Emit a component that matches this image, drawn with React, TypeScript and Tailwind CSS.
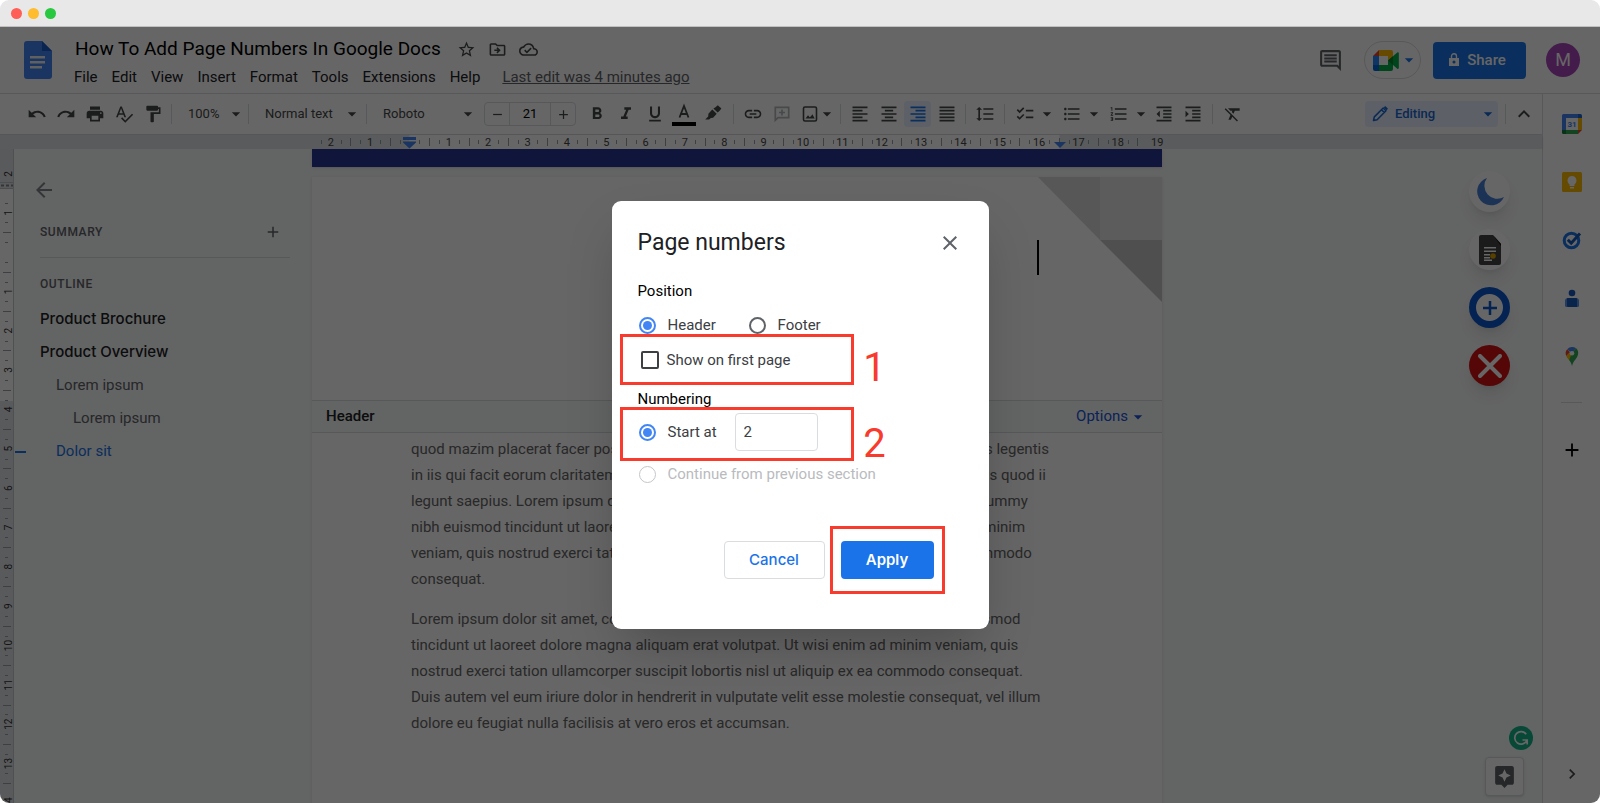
import React, { useState } from 'react';
import type { IconType } from 'react-icons';
import {
  MdAdd,
  MdArrowBack,
  MdArrowDropDown,
  MdAssistant,
  MdChecklist,
  MdChevronRight,
  MdClose,
  MdExpandLess,
  MdFormatAlignCenter,
  MdFormatAlignJustify,
  MdFormatAlignLeft,
  MdFormatAlignRight,
  MdFormatBold,
  MdFormatClear,
  MdFormatIndentDecrease,
  MdFormatIndentIncrease,
  MdFormatItalic,
  MdFormatLineSpacing,
  MdFormatListBulleted,
  MdFormatListNumbered,
  MdFormatPaint,
  MdFormatUnderlined,
  MdInsertLink,
  MdOutlineCloudDone,
  MdOutlineComment,
  MdOutlineDriveFileMove,
  MdPrint,
  MdRedo,
  MdRemove,
  MdSpellcheck,
  MdStarBorder,
  MdUndo,
} from 'react-icons/md';

const MENUS = ['File', 'Edit', 'View', 'Insert', 'Format', 'Tools', 'Extensions', 'Help'];

const OUTLINE = [
  { label: 'Product Brochure', className: "pl-[26px] font-['Inter',sans-serif] font-medium text-[#202124]" },
  { label: 'Product Overview', className: "pl-[26px] font-['Inter',sans-serif] font-medium text-[#202124]" },
  { label: 'Lorem ipsum', className: 'pl-[42px] text-[#5f6368]' },
  { label: 'Lorem ipsum', className: 'pl-[59px] text-[#5f6368]' },
  { label: 'Dolor sit', className: 'pl-[42px] text-[#1a73e8]', active: true },
];

const PARAGRAPHS = [
  [
    'quod mazim placerat facer possim assum. Typi non habent claritatem insitam; est usus legentis',
    'in iis qui facit eorum claritatem. Investigationes demonstraverunt lectores legere me lius quod ii',
    'legunt saepius. Lorem ipsum dolor sit amet, consectetuer adipiscing elit, sed diam nonummy',
    'nibh euismod tincidunt ut laoreet dolore magna aliquam erat volutpat. Ut wisi enim ad minim',
    'veniam, quis nostrud exerci tation ullamcorper suscipit lobortis nisl ut aliquip ex ea commodo',
    'consequat.',
  ],
  [
    'Lorem ipsum dolor sit amet, cons ectetuer adipiscing elit, sed diam nonummy nibh euismod',
    'tincidunt ut laoreet dolore magna aliquam erat volutpat. Ut wisi enim ad minim veniam, quis',
    'nostrud exerci tation ullamcorper suscipit lobortis nisl ut aliquip ex ea commodo consequat.',
    'Duis autem vel eum iriure dolor in hendrerit in vulputate velit esse molestie consequat, vel illum',
    'dolore eu feugiat nulla facilisis at vero eros et accumsan.',
  ],
];

// Ruler geometry, one unit is a centimetre
const UNIT = 39.35;
const RULER_ZERO = 97.5;

const DocsLogo: React.FC = () => (
  <svg viewBox="0 0 28 38" className="h-[38px] w-7" aria-hidden="true">
    <path d="M3 0h15l10 10v25a3 3 0 0 1-3 3H3a3 3 0 0 1-3-3V3a3 3 0 0 1 3-3z" fill="#4285f4" />
    <path d="M18 0l10 10H18z" fill="#1a5dc8" />
    <path d="M6 15h15v2.4H6zM6 20h15v2.4H6zM6 25h12v2.4H6z" fill="#f1f1f1" />
  </svg>
);

const MeetLogo: React.FC = () => (
  <svg viewBox="0 0 26 21" className="h-[21px] w-[26px] shrink-0" aria-hidden="true">
    <path d="M6 0v6H0z" fill="#ea4335" />
    <path d="M0 6h6v9H0z" fill="#2684fc" />
    <path d="M0 15h6v6H2a2 2 0 0 1-2-2z" fill="#0066da" />
    <path d="M6 0h12a2 2 0 0 1 2 2v6l-5 2.500V6H6z" fill="#ffba00" />
    <path d="M6 15h9v-4.500l5 2V19a2 2 0 0 1-2 2H6z" fill="#00ac47" />
    <path d="M15 10.500L24.300 2.500c.700-.500 1.500-.2 1.500.600v15c0 .8-.8 1.100-1.500.600z" fill="#00ac47" />
    <path d="M15 10.500l5-4.300v8.600z" fill="#00832d" />
  </svg>
);

const HighlighterIcon: React.FC = () => (
  <svg viewBox="0 0 20 20" className="size-5" fill="currentColor" aria-hidden="true">
    <path d="M12.500 3.200l2.300-2 3.600 3.300-2 2.500-1.800 1.600-4.200-4zM9.300 5.600l4.400 4.200-3.600 4-2.200.2-1.800 1.600H2.200l3-3.200.2-2.600z" />
  </svg>
);

const AddCommentIcon: React.FC = () => (
  <svg viewBox="0 0 20 20" className="size-5 text-[#b4b6b9]" fill="none" stroke="currentColor" strokeWidth="1.7" aria-hidden="true">
    <path d="M3.300 3.300h13.400v10.400H6l-2.700 2.600zM10 5.500v6M7 8.500h6" />
  </svg>
);

const PhotoIcon: React.FC = () => (
  <svg viewBox="0 0 20 20" className="size-5" aria-hidden="true">
    <rect x="2.500" y="3" width="13" height="14" rx="1.500" fill="none" stroke="currentColor" strokeWidth="1.600" />
    <path d="M4.500 14.500l2.500-3.200 1.700 2 1.300-1 1.400-2 2.300 4.200z" fill="currentColor" />
  </svg>
);

const PencilIcon: React.FC = () => (
  <svg viewBox="0 0 18 18" className="size-[18px]" fill="none" stroke="currentColor" strokeWidth="1.500" strokeLinejoin="round" aria-hidden="true">
    <path d="M2.500 15.500l.8-3.600L12.200 3l2.800 2.800-8.900 8.900zM10.500 4.700l2.800 2.800" />
    <path d="M13.500 1.700l2.800 2.800" strokeWidth="2" />
  </svg>
);

const TextColorIcon: React.FC = () => (
  <svg viewBox="0 0 24 24" className="size-6" aria-hidden="true">
    <path d="M7.500 15.500L12 4l4.500 11.500M9 12h6" fill="none" stroke="currentColor" strokeWidth="1.800" />
    <path d="M0 20h24v4H0z" fill="#000" />
  </svg>
);

const CalendarLogo: React.FC = () => (
  <svg viewBox="0 0 20 20" className="size-5" aria-hidden="true">
    <path d="M1.500 0H16v4H4v12H0V1.500A1.500 1.500 0 0 1 1.500 0z" fill="#4285f4" />
    <path d="M16 0h2.500A1.500 1.500 0 0 1 20 1.500V4h-4z" fill="#1967d2" />
    <path d="M16 4h4v12h-4z" fill="#fbbc04" />
    <path d="M4 16h12v4H4z" fill="#34a853" />
    <path d="M0 16h4v4H1.500A1.500 1.500 0 0 1 0 18.500z" fill="#188038" />
    <path d="M16 16h4l-4 4z" fill="#ea4335" />
    <path d="M4 4h12v12H4z" fill="#fff" />
    <text x="10" y="13" textAnchor="middle" fontSize="8" fontWeight="700" fill="#4285f4">31</text>
  </svg>
);

const KeepLogo: React.FC = () => (
  <svg viewBox="0 0 20 20" className="size-5" aria-hidden="true">
    <rect width="20" height="20" rx="1.500" fill="#fbbc04" />
    <path d="M10 4a4.500 4.500 0 0 0-2.500 8.200V14h5v-1.800A4.500 4.500 0 0 0 10 4zM8 15h4v1.500H8z" fill="#fff" />
  </svg>
);

const TasksLogo: React.FC = () => (
  <svg viewBox="0 0 20 20" className="size-5" fill="none" aria-hidden="true">
    <circle cx="9.500" cy="10.500" r="7.300" stroke="#1a73e8" strokeWidth="3" />
    <path d="M5.800 9.800l3.400 3.400L18 3.500" stroke="#185abc" strokeWidth="3" />
  </svg>
);

const ContactsLogo: React.FC = () => (
  <svg viewBox="0 0 20 20" className="size-5" aria-hidden="true">
    <circle cx="10" cy="5" r="3.300" fill="#185abc" />
    <path d="M6 10h8a3 3 0 0 1 3 3v4.500a1.500 1.500 0 0 1-1.500 1.500h-11A1.500 1.500 0 0 1 3 17.500V13a3 3 0 0 1 3-3z" fill="#5a94ee" />
    <path d="M6 10h8a3 3 0 0 1 1 .2V19H6.500A1.500 1.500 0 0 1 5 17.500v-7.300a3 3 0 0 1 1-.2z" fill="#185abc" />
  </svg>
);

const MapsLogo: React.FC = () => (
  <svg viewBox="0 -1 20 20" className="size-5" aria-hidden="true">
    <path d="M10 0a6.300 6.300 0 0 0-4.800 2.200L8 4.600 10 6.300l4-5A6.200 6.200 0 0 0 10 0z" fill="#4285f4" />
    <path d="M5.200 2.200A6.300 6.300 0 0 0 4.300 9L8 5.200z" fill="#ea4335" />
    <path d="M4.300 9c.5 1.200 1.600 2.500 2.700 4L12 7.700 8 5.200z" fill="#fbbc04" />
    <path d="M14 1.300L10 6.300l-3 6.700c1.500 1.900 2.200 3 3 6 .8-4 3-5.800 4.800-8.600 2-3 2-7-.8-9.100z" fill="#34a853" />
    <circle cx="10" cy="6.300" r="2.300" fill="#fff" />
  </svg>
);

const HorizontalRuler: React.FC = () => {
  const quarters = Array.from({ length: 85 }, (_, i) => i - 10);
  const labels = Array.from({ length: 22 }, (_, i) => i - 2).filter((n) => n !== 0);
  return (
    <svg width="860" height="14" className="block shrink-0" aria-hidden="true">
      <rect x={RULER_ZERO} width="650" height="14" fill="#fff" />
      {quarters.filter((q) => q % 4 !== 0).map((q) => {
        const tall = Math.abs(q) % 4 === 2;
        return (
          <rect key={q} x={Math.round(RULER_ZERO + (q * UNIT) / 4)} y={tall ? 3 : 5} width="1" height={tall ? 8 : 4} fill="#9aa0a6" />
        );
      })}
      {labels.map((n) => (
        <text key={n} x={RULER_ZERO + n * UNIT} y="11" textAnchor="middle" fontSize="11" fill="#444">
          {Math.abs(n)}
        </text>
      ))}
      <path d="M91 2h13v3H91zM91 6.500h13v1l-6.500 6-6.500-6z" fill="#4285f4" />
      <path d="M742 7h12l-6 6z" fill="#4285f4" />
    </svg>
  );
};

const VerticalRuler: React.FC = () => {
  const quarters = Array.from({ length: 60 }, (_, i) => i - 5);
  const labels = Array.from({ length: 14 }, (_, i) => i + 1);
  const zero = 103;
  return (
    <svg width="14" height="654" className="block shrink-0 bg-[#dfe2e7]" aria-hidden="true">
      <rect y="40" width="13" height="212" fill="#fff" />
      <path d="M1 36.500h12" stroke="#80868b" strokeWidth="2" strokeDasharray="3 2" />
      <path d="M0 33.500h13M0 39.500h13" stroke="#bdc1c6" />
      {quarters.filter((q) => q % 4 !== 0).map((q) => {
        const tall = Math.abs(q) % 4 === 2;
        return (
          <rect key={q} x={tall ? 3 : 5} y={Math.round(zero + (q * UNIT) / 4)} width={tall ? 8 : 3} height="1" fill="#9aa0a6" />
        );
      })}
      {[-1, ...labels].map((n) => (
        <text key={n} transform={`translate(12 ${zero + n * UNIT}) rotate(-90)`} textAnchor="middle" fontSize="10" fill="#333">
          {Math.abs(n)}
        </text>
      ))}
      <text transform="translate(12 25) rotate(-90)" textAnchor="middle" fontSize="10" fill="#333">2</text>
      <path d="M13.500 0v654" stroke="#c6c9cc" />
    </svg>
  );
};

const Divider: React.FC<{ className?: string }> = ({ className }) => (
  <div className={`h-5 w-px shrink-0 bg-[#dadce0] ${className ?? ''}`} />
);

const ToolButton: React.FC<{ label: string; icon?: IconType; active?: boolean; children?: React.ReactNode }> = ({
  label,
  icon: Icon,
  active,
  children,
}) => (
  <button type="button" aria-label={label} aria-pressed={active} className="flex w-[29px] shrink-0 items-center justify-center">
    <span
      className={
        active
          ? 'flex h-[26px] w-[27px] items-center justify-center rounded-sm bg-[#e8f0fe] text-[#1a73e8]'
          : 'flex items-center justify-center'
      }
    >
      {Icon ? <Icon size={20} /> : children}
    </span>
  </button>
);

const Caret: React.FC<{ label: string }> = ({ label }) => (
  <button type="button" aria-label={label} className="flex w-4 shrink-0 items-center justify-center">
    <MdArrowDropDown size={20} className="shrink-0" />
  </button>
);

const ToolSelect: React.FC<{ label: string; value: string; className: string }> = ({ label, value, className }) => (
  <div className={`relative flex shrink-0 items-center ${className}`}>
    <select aria-label={label} defaultValue={value} className="w-full appearance-none bg-transparent text-[13px]">
      <option>{value}</option>
    </select>
    <MdArrowDropDown size={20} className="pointer-events-none absolute -right-1" />
  </div>
);

const Header: React.FC = () => (
  <header className="flex h-[67px] shrink-0 items-center border-b border-[#dadce0] pr-5 pl-6">
    <DocsLogo />
    <div className="ml-[22px] flex flex-col pt-1.5">
      <div className="flex h-7 items-center text-[#444746]">
        <h1 className="mr-4 pl-px text-[19px] text-black">How To Add Page Numbers In Google Docs</h1>
        <button type="button" aria-label="Star" className="mr-3"><MdStarBorder size={19} /></button>
        <button type="button" aria-label="Move" className="mr-3"><MdOutlineDriveFileMove size={19} /></button>
        <button type="button" aria-label="Document status"><MdOutlineCloudDone size={19} /></button>
      </div>
      <nav className="flex h-7 items-center gap-3.5 text-[15px] text-[#202124]">
        {MENUS.map((menu) => (
          <button key={menu} type="button">{menu}</button>
        ))}
        <a href="#history" className="ml-2 text-[#5f6368] underline">Last edit was 4 minutes ago</a>
      </nav>
    </div>
    <div className="ml-auto flex items-center">
      <button type="button" aria-label="Open comment history" className="mr-[21px] text-[#5f6368]">
        <MdOutlineComment size={25} />
      </button>
      <button type="button" aria-label="Join a call" className="mr-3 flex h-[38px] w-[57px] items-center justify-center rounded-full border border-[#dadce0] pl-1.5 text-[#1a73e8]">
        <MeetLogo />
        <MdArrowDropDown size={20} className="shrink-0" />
      </button>
      <button type="button" className="mr-5 flex h-[37px] w-[93px] items-center justify-center gap-2 rounded bg-[#1a73e8] pr-1 text-[15px] font-medium text-white">
        <svg viewBox="0 0 10 14" className="h-3.5 w-2.5" aria-hidden="true">
          <path d="M0 5h10v8H0z" fill="#fff" />
          <path d="M2.500 5V3.200a2.500 2.500 0 0 1 5 0V5" fill="none" stroke="#fff" strokeWidth="1.400" />
          <circle cx="5" cy="9" r="1.500" fill="#1a73e8" />
        </svg>
        Share
      </button>
      <button type="button" aria-label="Account" className="flex size-[34px] items-center justify-center rounded-full bg-[#ab47bc] text-lg text-white">
        M
      </button>
    </div>
  </header>
);

const Toolbar: React.FC = () => (
  <div className="flex h-[41px] shrink-0 items-center border-b border-[#dadce0] pl-[22px] text-[#444746]">
    <ToolButton label="Undo" icon={MdUndo} />
    <ToolButton label="Redo" icon={MdRedo} />
    <ToolButton label="Print" icon={MdPrint} />
    <ToolButton label="Spelling and grammar check" icon={MdSpellcheck} />
    <ToolButton label="Paint format" icon={MdFormatPaint} />
    <Divider className="ml-1" />
    <ToolSelect label="Zoom" value="100%" className="mr-1.5 ml-4 w-[54px]" />
    <Divider />
    <ToolSelect label="Styles" value="Normal text" className="mr-2 ml-4 w-[93px]" />
    <Divider />
    <ToolSelect label="Font" value="Roboto" className="mr-2.5 ml-4 w-[91px]" />
    <div className="mr-1.5 flex h-6 w-[92px] shrink-0 items-stretch rounded-sm border border-[#dadce0]">
      <button type="button" aria-label="Decrease font size" className="flex flex-1 items-center justify-center"><MdRemove size={15} /></button>
      <input aria-label="Font size" defaultValue="21" className="w-[42px] border-x border-[#dadce0] bg-transparent text-center text-[13px] text-black" />
      <button type="button" aria-label="Increase font size" className="flex flex-1 items-center justify-center"><MdAdd size={15} /></button>
    </div>
    <ToolButton label="Bold" icon={MdFormatBold} />
    <ToolButton label="Italic" icon={MdFormatItalic} />
    <ToolButton label="Underline" icon={MdFormatUnderlined} />
    <ToolButton label="Text color"><TextColorIcon /></ToolButton>
    <ToolButton label="Highlight color"><HighlighterIcon /></ToolButton>
    <Divider className="mr-1 ml-1.5" />
    <ToolButton label="Insert link" icon={MdInsertLink} />
    <ToolButton label="Add comment"><AddCommentIcon /></ToolButton>
    <ToolButton label="Insert image"><PhotoIcon /></ToolButton>
    <div className="-ml-1.5 flex">
      <Caret label="Image options" />
    </div>
    <Divider className="mr-1 ml-[5px]" />
    <ToolButton label="Left align" icon={MdFormatAlignLeft} />
    <ToolButton label="Center align" icon={MdFormatAlignCenter} />
    <ToolButton label="Right align" icon={MdFormatAlignRight} active />
    <ToolButton label="Justify" icon={MdFormatAlignJustify} />
    <Divider className="mx-1" />
    <ToolButton label="Line spacing" icon={MdFormatLineSpacing} />
    <Divider className="mx-[5px]" />
    <ToolButton label="Checklist" icon={MdChecklist} />
    <Caret label="Checklist options" />
    <div className="w-0.5" />
    <ToolButton label="Bulleted list" icon={MdFormatListBulleted} />
    <Caret label="Bulleted list options" />
    <div className="w-0.5" />
    <ToolButton label="Numbered list" icon={MdFormatListNumbered} />
    <Caret label="Numbered list options" />
    <ToolButton label="Decrease indent" icon={MdFormatIndentDecrease} />
    <ToolButton label="Increase indent" icon={MdFormatIndentIncrease} />
    <Divider className="mx-[5px]" />
    <ToolButton label="Clear formatting" icon={MdFormatClear} />

    <div className="ml-auto flex items-center">
      <div className="mr-[7px] flex h-[26px] w-[133px] items-center gap-1.5 rounded bg-[#e8f0fe] pr-1 pl-1.5 font-medium text-[#1967d2]">
        <PencilIcon />
        <ToolSelect label="Mode" value="Editing" className="grow" />
      </div>
      <Divider />
      <button type="button" aria-label="Hide the menus" className="flex w-9 items-center justify-center">
        <MdExpandLess size={24} />
      </button>
    </div>
  </div>
);

const OutlinePanel: React.FC = () => (
  <aside className="w-[298px] shrink-0 pt-[29px]">
    <button type="button" aria-label="Close document outline" className="ml-[18px] block text-[#80868b]">
      <MdArrowBack size={24} />
    </button>
    <div className="mt-5 mr-[22px] ml-[26px] flex h-9 items-start justify-between border-b border-[#dadce0] pt-px text-[#5f6368]">
      <h2 className="text-xs leading-[18px] font-medium tracking-wider">SUMMARY</h2>
      <button type="button" aria-label="Add summary" className="mr-2"><MdAdd size={18} /></button>
    </div>
    <h2 className="mt-[17px] ml-[26px] text-xs leading-[18px] font-medium tracking-wider text-[#5f6368]">OUTLINE</h2>
    <ul className="mt-2.5 text-[15px]">
      {OUTLINE.map((item, i) => (
        <li key={i} className="relative flex h-[33px] items-center">
          {item.active && <span className="absolute left-px h-0.5 w-[11px] bg-[#1a73e8]" />}
          <a href="#outline" className={item.className}>{item.label}</a>
        </li>
      ))}
    </ul>
  </aside>
);

const DocumentPage: React.FC = () => (
  <div className="flex w-[850px] shrink-0 flex-col">
    <div className="h-[18px] shrink-0 bg-[#283593] shadow" />
    <article className="mt-2.5 flex flex-1 flex-col bg-white shadow">
      <div className="relative h-[223px] shrink-0">
        <svg viewBox="0 0 124 125" className="absolute top-0 right-0 h-[125px] w-[124px]" aria-hidden="true">
          <path d="M0 0h62v63z" fill="#d9d9d9" />
          <path d="M62 0h62v63H62z" fill="#e6e6e6" />
          <path d="M62 63h62v62z" fill="#c6c6c6" />
        </svg>
        <span className="absolute top-[63px] right-[123px] h-[35px] w-0.5 bg-black" />
      </div>
      <div className="flex h-[33px] shrink-0 items-center justify-between border-y border-[#dadce0] bg-[#f8f9fa] px-3.5 text-[15px]">
        <span className="font-medium text-[#202124]">Header</span>
        <button type="button" className="flex items-center text-[#1a56db]">
          Options
          <MdArrowDropDown size={20} />
        </button>
      </div>
      <div className="flex flex-col gap-3.5 pt-[3px] pl-[99px] text-[15px] leading-[26px] whitespace-nowrap text-[#666]">
        {PARAGRAPHS.map((lines, i) => (
          <p key={i}>
            {lines.map((line) => (
              <span key={line} className="block">{line}</span>
            ))}
          </p>
        ))}
      </div>
    </article>
  </div>
);

const FloatingButtons: React.FC = () => (
  <div className="absolute top-[22px] right-[32px] flex flex-col gap-[17px]">
    <button type="button" aria-label="Dark mode" className="flex size-[41px] items-center justify-center rounded-full bg-white shadow-lg">
      <svg viewBox="0 0 28 28" className="size-7" aria-hidden="true">
        <path d="M11 0A14 14 0 1 0 28 19 13 13 0 0 1 11 0z" fill="#4a7fd6" />
      </svg>
    </button>
    <button type="button" aria-label="Dark document" className="flex size-[41px] items-center justify-center rounded-full bg-white shadow-lg">
      <svg viewBox="0 0 22 30" className="h-[30px] w-[22px]" aria-hidden="true">
        <path d="M2 0h12l8 9v19a2 2 0 0 1-2 2H2a2 2 0 0 1-2-2V2a2 2 0 0 1 2-2z" fill="#444" />
        <path d="M14 0l8 9v2z" fill="#111" />
        <path d="M5 12h12v1.500H5zM5 15.500h12V17H5zM5 19h6v1.500H5zM5 22h6v1.500H5zM5 24.500h8V26H5z" fill="#fff" />
        <circle cx="14" cy="21" r="2.800" fill="#d9a400" />
      </svg>
    </button>
    <button type="button" aria-label="Add" className="flex size-[41px] items-center justify-center rounded-full border-[7px] border-[#0b57d0] bg-white text-[#0b57d0] shadow-lg">
      <svg viewBox="0 0 14 14" className="size-3.5" aria-hidden="true">
        <path d="M7 0v14M0 7h14" stroke="currentColor" strokeWidth="2.500" />
      </svg>
    </button>
    <button type="button" aria-label="Close tools" className="flex size-[41px] items-center justify-center rounded-full bg-[#d50f0f] text-white shadow-lg">
      <svg viewBox="0 0 24 24" className="size-6" aria-hidden="true">
        <path d="M2 2l20 20M22 2L2 22" stroke="#fff" strokeWidth="4" strokeLinecap="round" />
      </svg>
    </button>
  </div>
);

const SidePanel: React.FC = () => (
  <aside className="flex w-[58px] shrink-0 flex-col items-center border-l border-[#dadce0] pt-px">
    {[CalendarLogo, KeepLogo, TasksLogo, ContactsLogo, MapsLogo].map((Logo, i) => (
      <button key={i} type="button" aria-label={['Calendar', 'Keep', 'Tasks', 'Contacts', 'Maps'][i]} className="flex h-[58px] w-full items-center justify-center">
        <Logo />
      </button>
    ))}
    <hr className="mt-[17px] w-[21px] border-[#dadce0]" />
    <button type="button" aria-label="Get add-ons" className="mt-9 text-black"><MdAdd size={22} /></button>
    <button type="button" aria-label="Hide side panel" className="mt-auto mb-[19px] text-[#444746]"><MdChevronRight size={20} /></button>
  </aside>
);

// Red frame laid over a control to call it out, with an optional step number
const Callout: React.FC<{ className: string; step?: string }> = ({ className, step }) => (
  <div className={`pointer-events-none absolute border-[3px] border-[#f83b2d] ${className}`}>
    {step && (
      <span className="absolute -right-[38px] -bottom-1 w-7 text-center text-[40px] leading-9 text-[#f83b2d]">
        {step}
      </span>
    )}
  </div>
);

const radioClass =
  "grid size-[17px] shrink-0 appearance-none place-items-center rounded-full border-2 border-[#5f6368] before:size-[9px] before:rounded-full checked:border-[#4285f4] checked:before:bg-[#4285f4] disabled:border disabled:border-[#c4c6c9]";

const PageNumbersDialog: React.FC = () => {
  const [position, setPosition] = useState('header');
  const [showOnFirst, setShowOnFirst] = useState(false);
  const [startAt, setStartAt] = useState('2');

  return (
    <div role="dialog" aria-labelledby="dialog-title" className="w-[377px] rounded-[9px] bg-white pt-[26px] pr-[27px] pb-[50px] pl-[26px] text-[15px] text-[#3c4043] shadow-2xl">
      <div className="flex h-8 items-center justify-between">
        <h2 id="dialog-title" className="text-[23px] text-[#202124]">Page numbers</h2>
        <button type="button" aria-label="Close" className="text-[#5f6368]"><MdClose size={24} /></button>
      </div>

      <h3 className="mt-[22px] h-5 leading-5 text-black">Position</h3>
      <div className="mt-[14px] flex h-5 items-center">
        <label className="flex w-[110px] items-center gap-3 pl-px">
          <input type="radio" name="position" className={radioClass} checked={position === 'header'} onChange={() => setPosition('header')} />
          Header
        </label>
        <label className="flex items-center gap-3 pl-px">
          <input type="radio" name="position" className={radioClass} checked={position === 'footer'} onChange={() => setPosition('footer')} />
          Footer
        </label>
      </div>
      <div className="relative mt-[15px] flex h-5 items-center">
        <label className="flex items-center gap-2 pl-[3px]">
          <input type="checkbox" className="size-[18px] shrink-0 appearance-none rounded-xs border-2 border-[#3c4043] checked:bg-[#4285f4]" checked={showOnFirst} onChange={(e) => setShowOnFirst(e.target.checked)} />
          Show on first page
        </label>
        <Callout step="1" className="-top-4 -left-[18px] h-[51px] w-[234px]" />
      </div>

      <h3 className="mt-[19px] h-5 leading-5 text-black">Numbering</h3>
      <div className="relative mt-1 flex h-[38px] items-center">
        <label className="flex w-[97px] items-center gap-3 pl-px">
          <input type="radio" name="numbering" className={radioClass} defaultChecked />
          Start at
        </label>
        <input aria-label="Start number" className="h-[38px] w-[83px] rounded border border-[#dadce0] px-2 text-[#3c4043]" value={startAt} onChange={(e) => setStartAt(e.target.value)} />
        <Callout step="2" className="-top-1.5 -left-[18px] h-[54px] w-[234px]" />
      </div>
      <label className="mt-[13px] flex h-5 items-center gap-3 pl-px text-[#b9bbbe]">
        <input type="radio" name="numbering" className={radioClass} disabled />
        Continue from previous section
      </label>

      <div className="mt-[57px] mr-7 flex h-[38px] justify-end gap-4 font-['Inter',sans-serif]">
        <button type="button" className="w-[101px] rounded border border-[#dadce0] font-medium text-[#1a73e8]">Cancel</button>
        <div className="relative flex">
          <button type="button" className="w-[93px] rounded bg-[#1a73e8] font-semibold text-white">Apply</button>
          <Callout className="-inset-x-[11px] -inset-y-[15px]" />
        </div>
      </div>
    </div>
  );
};

const App: React.FC = () => (
  <div className="flex h-screen flex-col overflow-hidden rounded-[9px] bg-white font-[Roboto,Arial,sans-serif]">
    <div className="flex h-[27px] shrink-0 items-center gap-1.5 border-b border-[#c0c0c0] bg-[#e8e8e8] pt-px pl-[11px]">
      <span className="size-[11px] rounded-full bg-[#ff5f57]" />
      <span className="size-[11px] rounded-full bg-[#febc2e]" />
      <span className="size-[11px] rounded-full bg-[#28c840]" />
    </div>

    <div className="relative flex min-h-0 flex-1 flex-col">
      <Header />
      <div className="flex min-h-0 flex-1">
        <div className="flex min-w-0 flex-1 flex-col">
          <Toolbar />
          <div className="relative flex h-[14px] shrink-0 bg-[#e1e4e9] pl-[312px] shadow-sm">
            <HorizontalRuler />
          </div>
          <main className="relative flex min-h-0 flex-1 overflow-hidden bg-[#f8f9fa]">
            <VerticalRuler />
            <OutlinePanel />
            <DocumentPage />
            <FloatingButtons />
            <button type="button" aria-label="Grammar check" className="absolute right-[9px] bottom-[53px] flex size-6 items-center justify-center rounded-full bg-[#12b48b]">
              <svg viewBox="0 0 16 16" className="size-4" fill="none" stroke="#fff" strokeWidth="1.700" aria-hidden="true">
                <path d="M13.200 4.200A6.300 6.300 0 1 0 13.800 10.500M9.500 10h4.700v4.500" />
              </svg>
            </button>
            <button type="button" aria-label="Explore" className="absolute right-[18px] bottom-[7px] flex size-[39px] items-center justify-center rounded-sm border border-[#dadce0] bg-white text-[#5f6368] shadow-sm">
              <MdAssistant size={25} />
            </button>
          </main>
        </div>
        <SidePanel />
      </div>

      <div className="absolute inset-0 flex items-center justify-center bg-black/60">
        <PageNumbersDialog />
      </div>
    </div>
  </div>
);

export default App;
